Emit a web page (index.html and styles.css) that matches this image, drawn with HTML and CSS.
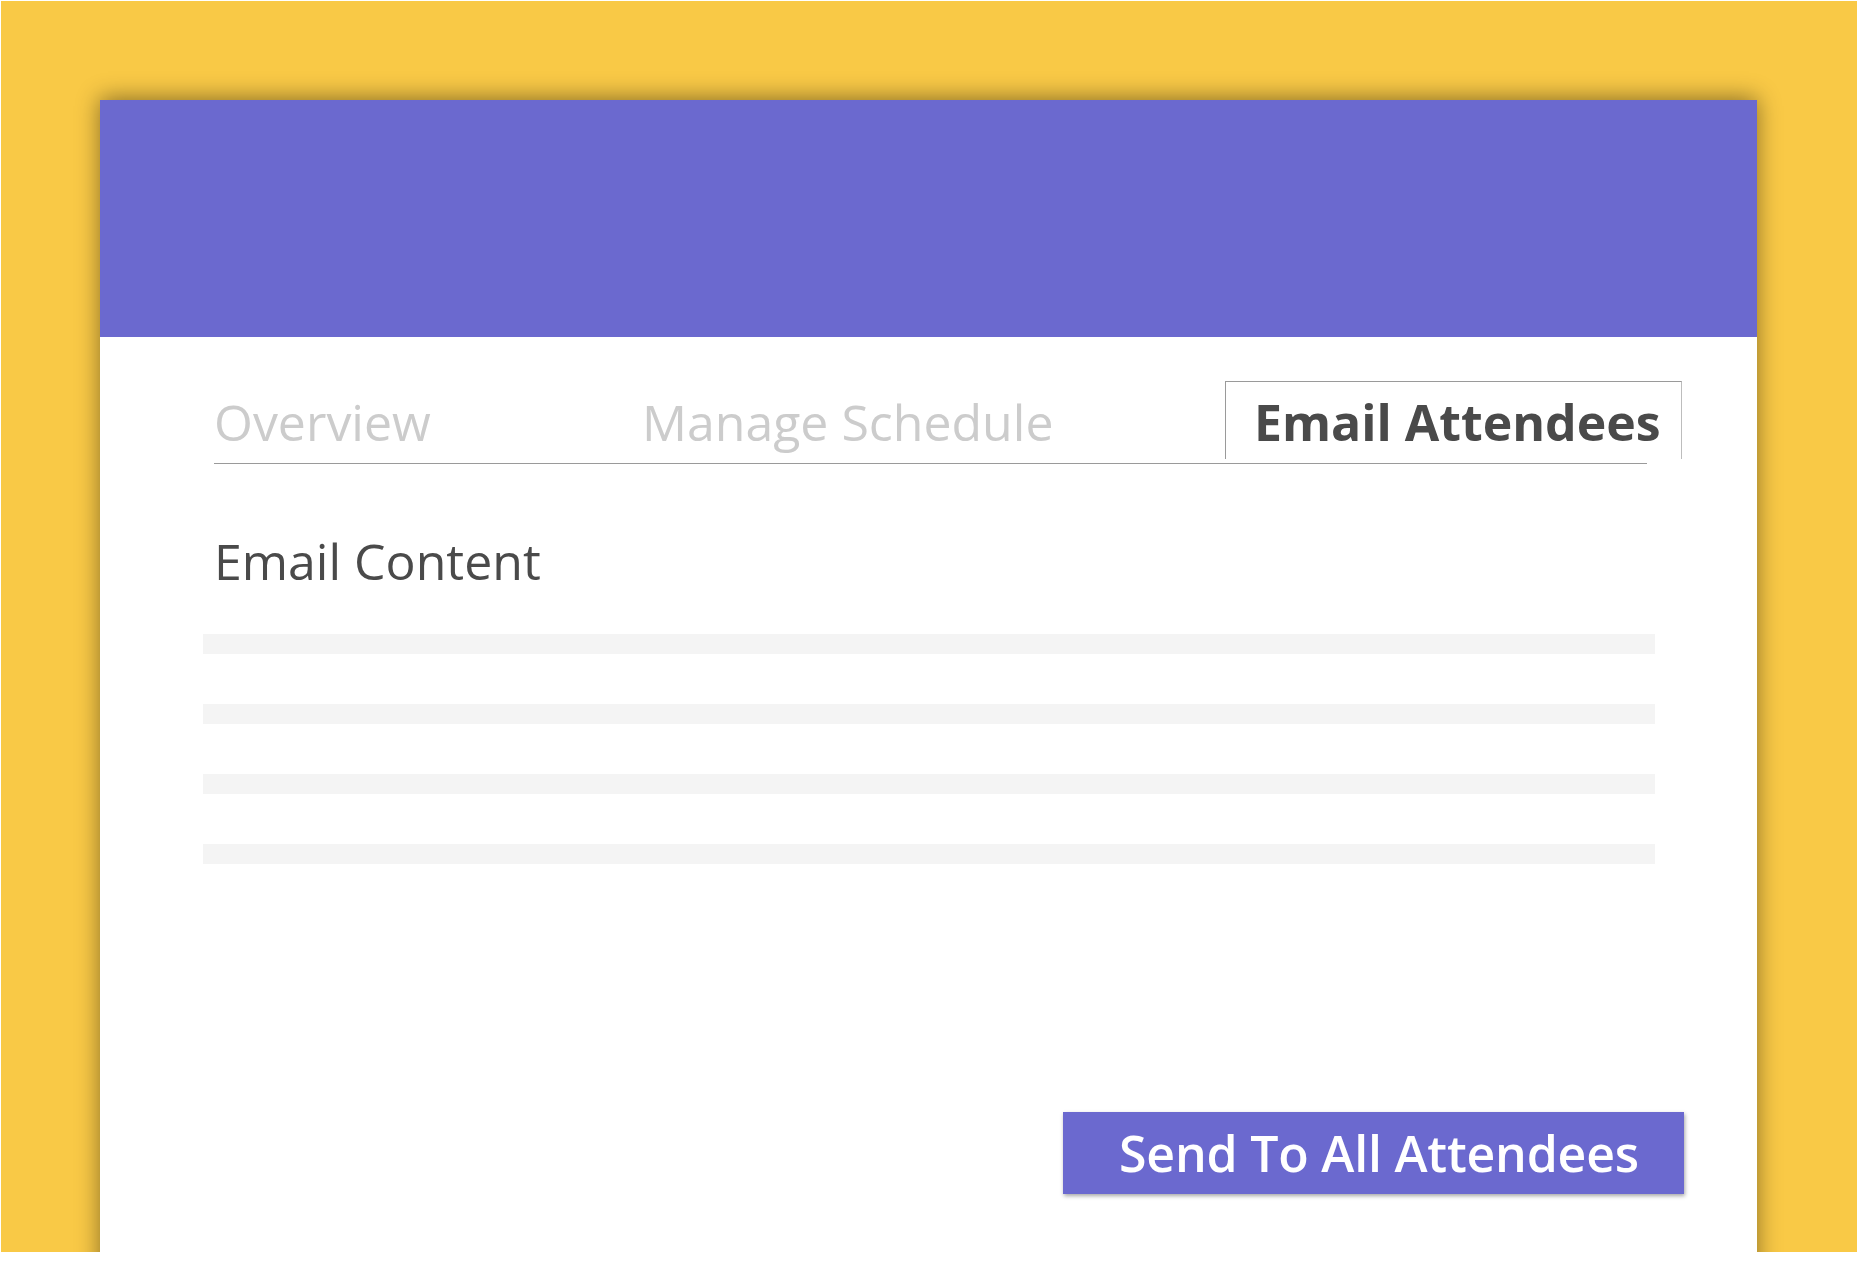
FILE: index.html
```html
<!DOCTYPE html>
<html lang="en">
<head>
<meta charset="utf-8">
<title>Email Attendees</title>
<link rel="stylesheet" href="styles.css">
</head>
<body>
<div class="frame">
  <div class="card">
    <div class="card-header"></div>
    <div class="card-body">
      <nav class="tabs">
        <div class="tab tab-overview">Overview</div>
        <div class="tab tab-schedule">Manage Schedule</div>
        <div class="tab tab-active">Email Attendees</div>
      </nav>
      <div class="tab-rule"></div>
      <h2 class="section-title">Email Content</h2>
      <div class="placeholder-lines">
        <div class="line"></div>
        <div class="line"></div>
        <div class="line"></div>
        <div class="line"></div>
      </div>
      <div class="actions">
        <button class="send-btn" type="button">Send To All Attendees</button>
      </div>
    </div>
  </div>
</div>
</body>
</html>
```

FILE: styles.css
```css
html, body {
  margin: 0;
  padding: 0;
  background: #ffffff;
}

body {
  font-family: "Open Sans", "Noto Sans", "Liberation Sans", sans-serif;
  padding: 1px 0 0 1px;
}

.frame {
  width: 1856px;
  height: 1251px;
  background: #f9c946;
  box-sizing: border-box;
  padding: 99px 99px 0 99px;
  overflow: hidden;
}

.card {
  width: 1657px;
  height: 1300px;
  background: #ffffff;
  box-shadow: 0 -2px 22px rgba(0, 0, 0, 0.45);
  display: flex;
  flex-direction: column;
}

.card-header {
  height: 237px;
  background: #6b69cf;
  flex: none;
}

.card-body {
  padding: 44px 0 0 103px;
  display: flex;
  flex-direction: column;
}

.tabs {
  display: flex;
  align-items: flex-start;
  padding-left: 11px;
}

.tab {
  box-sizing: border-box;
  height: 78px;
  border: 1px solid transparent;
  border-bottom: 0;
  padding-top: 3px;
  line-height: 75px;
  font-size: 50px;
  color: #cccccc;
  white-space: nowrap;
}

.tab-overview {
  width: 428px;
  margin-left: -1px;
}

.tab-schedule {
  width: 584px;
}

.tab-active {
  width: 457px;
  padding-left: 28px;
  border-color: #9a9a9a #bdbdbd transparent #9a9a9a;
  font-weight: 700;
  color: #4a4a4a;
}

.tab-rule {
  margin: 4px 0 0 11px;
  width: 1433px;
  height: 1px;
  background: #9a9a9a;
}

.section-title {
  margin: 62px 0 0 11px;
  font-size: 50px;
  line-height: 70px;
  font-weight: 400;
  color: #4a4a4a;
}

.placeholder-lines {
  margin-top: 38px;
  display: flex;
  flex-direction: column;
  gap: 50px;
}

.line {
  width: 1452px;
  height: 20px;
  background: #f4f4f4;
}

.actions {
  display: flex;
  justify-content: flex-end;
  padding-right: 73px;
  margin-top: 248px;
}

.send-btn {
  box-sizing: border-box;
  width: 621px;
  height: 82px;
  border: 0;
  margin: 0;
  padding: 0 0 0 56px;
  text-align: left;
  background: #6b69cf;
  color: #ffffff;
  font-family: "Open Sans", "Noto Sans", "Liberation Sans", sans-serif;
  font-size: 50px;
  font-weight: 600;
  letter-spacing: -0.2px;
  line-height: 82px;
  box-shadow: 1px 2px 4px rgba(0, 0, 0, 0.35);
  cursor: pointer;
}
```
